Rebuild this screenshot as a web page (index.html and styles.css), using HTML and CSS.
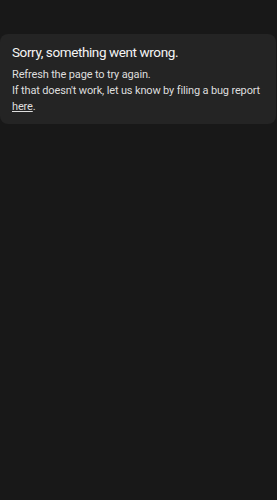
FILE: index.html
```html
<!DOCTYPE html>
<html lang="en">
<head>
  <meta charset="UTF-8">
  <meta name="viewport" content="width=device-width, initial-scale=1.0">
  <title>Error</title>
  <link rel="stylesheet" href="styles.css">
</head>
<body>
  <div class="error-card">
    <h1>Sorry, something went wrong.</h1>
    <p>Refresh the page to try again.</p>
    <p>If that doesn't work, let us know by filing a bug report <a href="#">here</a>.</p>
  </div>
</body>
</html>
```
FILE: styles.css
```css
body {
  font-family: Roboto, "Noto Sans", sans-serif;
  background-color: #181818;
  color: #e8e8e8;
  margin: 0;
  padding: 34px 1px 0 0;
  height: 500px;
  box-sizing: border-box;
}

.error-card {
  background-color: #242424;
  border-radius: 8px;
  padding: 9px 8px 9px 12px;
}

h1 {
  font-size: 13.5px;
  font-weight: 400;
  letter-spacing: -0.4px;
  color: #f4f4f4;
  margin: 0 0 6px;
  line-height: 18px;
}

p {
  font-size: 11px;
  letter-spacing: -0.15px;
  line-height: 16px;
  margin: 0;
  color: #dedede;
}

a {
  color: #dedede;
}
```
